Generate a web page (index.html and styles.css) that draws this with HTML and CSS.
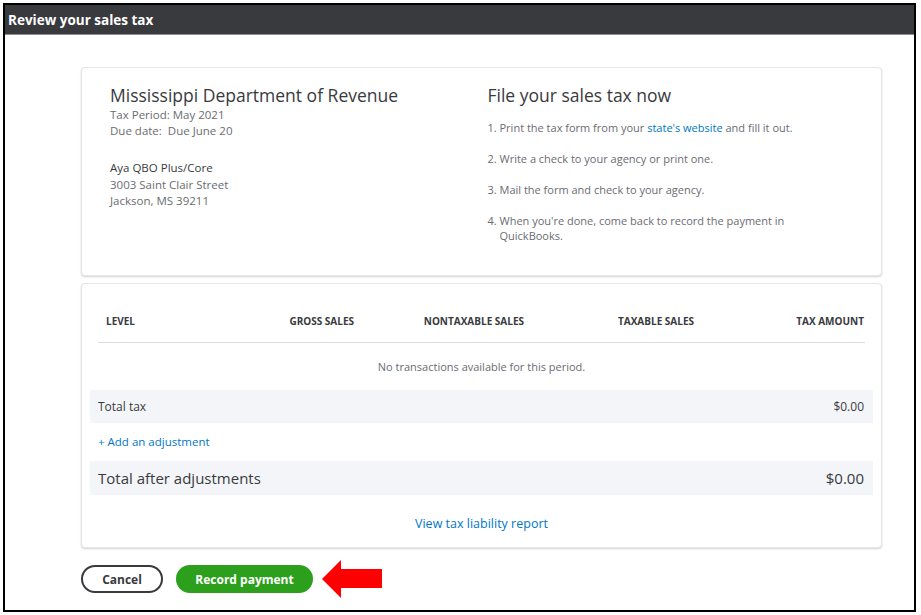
FILE: index.html
```html
<!DOCTYPE html>
<html lang="en">
<head>
    <meta charset="UTF-8">
    <meta name="viewport" content="width=device-width, initial-scale=1.0">
    <title>Review your sales tax</title>
    <link rel="stylesheet" href="styles.css">
</head>
<body>
    <div class="frame">
        <div class="topbar">Review your sales tax</div>

        <div class="content">
            <div class="card summary">
                <div class="agency">
                    <h2>Mississippi Department of Revenue</h2>
                    <p class="meta">Tax Period: May 2021</p>
                    <p class="meta">Due date:&nbsp; Due June 20</p>
                    <p class="company">Aya QBO Plus/Core</p>
                    <p class="address">3003 Saint Clair Street</p>
                    <p class="address">Jackson, MS 39211</p>
                </div>
                <div class="steps">
                    <h2>File your sales tax now</h2>
                    <ol>
                        <li><span class="num">1.</span><span>Print the tax form from your <a href="#">state's website</a> and fill it out.</span></li>
                        <li><span class="num">2.</span><span>Write a check to your agency or print one.</span></li>
                        <li><span class="num">3.</span><span>Mail the form and check to your agency.</span></li>
                        <li><span class="num">4.</span><span>When you're done, come back to record the payment in QuickBooks.</span></li>
                    </ol>
                </div>
            </div>

            <div class="card details">
                <div class="table-head">
                    <div class="col-level">Level</div>
                    <div>Gross sales</div>
                    <div>Nontaxable sales</div>
                    <div>Taxable sales</div>
                    <div>Tax amount</div>
                </div>
                <p class="empty">No transactions available for this period.</p>
                <div class="total-row">
                    <span>Total tax</span>
                    <span>$0.00</span>
                </div>
                <a href="#" class="add-link">+ Add an adjustment</a>
                <div class="total-row big">
                    <span>Total after adjustments</span>
                    <span>$0.00</span>
                </div>
                <div class="report">
                    <a href="#">View tax liability report</a>
                </div>
            </div>

            <div class="actions">
                <button class="btn cancel">Cancel</button>
                <button class="btn primary">Record payment</button>
                <svg class="arrow" width="60" height="38" viewBox="0 0 60 38">
                    <polygon points="0,19 19,0 19,9 60,9 60,28 19,28 19,38" fill="#ff0000"/>
                </svg>
            </div>
        </div>
    </div>
</body>
</html>
```

FILE: styles.css
```css
body {
    margin: 0;
    font-family: "Open Sans", Arial, sans-serif;
    color: #393a3d;
    background-color: #fff;
}

.frame {
    margin: 3px 0 0 3px;
    width: 913px;
    height: 609px;
    box-sizing: border-box;
    border: 2px solid #000;
}

.topbar {
    height: 29px;
    padding-left: 3px;
    display: flex;
    align-items: center;
    background-color: #393a3d;
    border-bottom: 1px solid #8d8e91;
    color: #fff;
    font-size: 13.5px;
    font-weight: bold;
}

.content {
    padding: 32px 0 0 76px;
}

.card {
    width: 801px;
    box-sizing: border-box;
    background-color: #fff;
    border: 1px solid #e6e6e8;
    border-radius: 4px;
    box-shadow: 0 1px 2px rgba(0, 0, 0, 0.18);
}

h2 {
    margin: 0;
    font-size: 17.5px;
    font-weight: normal;
    line-height: 24px;
    color: #393a3d;
}

p {
    margin: 0;
}

/* top card */
.summary {
    height: 209px;
    padding: 15px 28px 0;
    display: grid;
    grid-template-columns: 1fr 1fr;
    column-gap: 12px;
}

.meta {
    font-size: 11.5px;
    line-height: 16px;
    color: #6b6c72;
}

.company {
    margin-top: 20px;
    font-size: 11.5px;
    line-height: 18px;
    color: #393a3d;
}

.address {
    font-size: 11.5px;
    line-height: 16px;
    color: #6b6c72;
}

.steps ol {
    list-style: none;
    margin: 13px 0 0;
    padding: 0;
    max-width: 310px;
}

.steps li {
    display: flex;
    font-size: 11px;
    line-height: 15px;
    color: #6b6c72;
    margin-bottom: 16px;
}

.steps .num {
    width: 12px;
    flex-shrink: 0;
}

a {
    color: #0077c5;
    text-decoration: none;
}

/* bottom card */
.details {
    margin-top: 7px;
    padding: 0 16px 14px;
}

.table-head {
    display: grid;
    grid-template-columns: 86px repeat(4, 1fr);
    padding: 30px 1px 14px 0;
    border-bottom: 1px solid #dcdcde;
    font-size: 10px;
    font-weight: bold;
    line-height: 14px;
    text-transform: uppercase;
    text-align: right;
    color: #393a3d;
}

.table-head .col-level {
    text-align: left;
    padding-left: 8px;
}

.empty {
    margin-top: 16px;
    font-size: 11px;
    line-height: 16px;
    text-align: center;
    color: #6b6c72;
}

.total-row {
    margin: 15px -8px 0;
    height: 33px;
    padding: 0 8px 0 8px;
    display: flex;
    justify-content: space-between;
    align-items: center;
    background-color: #f4f5f8;
    font-size: 12px;
}

.total-row span:last-child {
    padding-right: 1px;
}

.add-link {
    display: block;
    margin-top: 11px;
    font-size: 11.5px;
    line-height: 16px;
}

.total-row.big {
    margin-top: 11px;
    height: 34px;
    font-size: 15px;
}

.report {
    margin-top: 20px;
    text-align: center;
    font-size: 12.5px;
    line-height: 18px;
}

/* buttons */
.actions {
    margin-top: 12px;
    display: flex;
    align-items: center;
}

.btn {
    height: 28px;
    border-radius: 14px;
    font-family: "Open Sans", Arial, sans-serif;
    font-size: 12px;
    font-weight: bold;
    cursor: pointer;
}

.cancel {
    width: 82px;
    border: 2px solid #393a3d;
    background-color: #fff;
    color: #393a3d;
}

.primary {
    width: 137px;
    margin-left: 13px;
    border: none;
    background-color: #2ca01c;
    color: #fff;
}

.arrow {
    margin-left: 9px;
}
```
